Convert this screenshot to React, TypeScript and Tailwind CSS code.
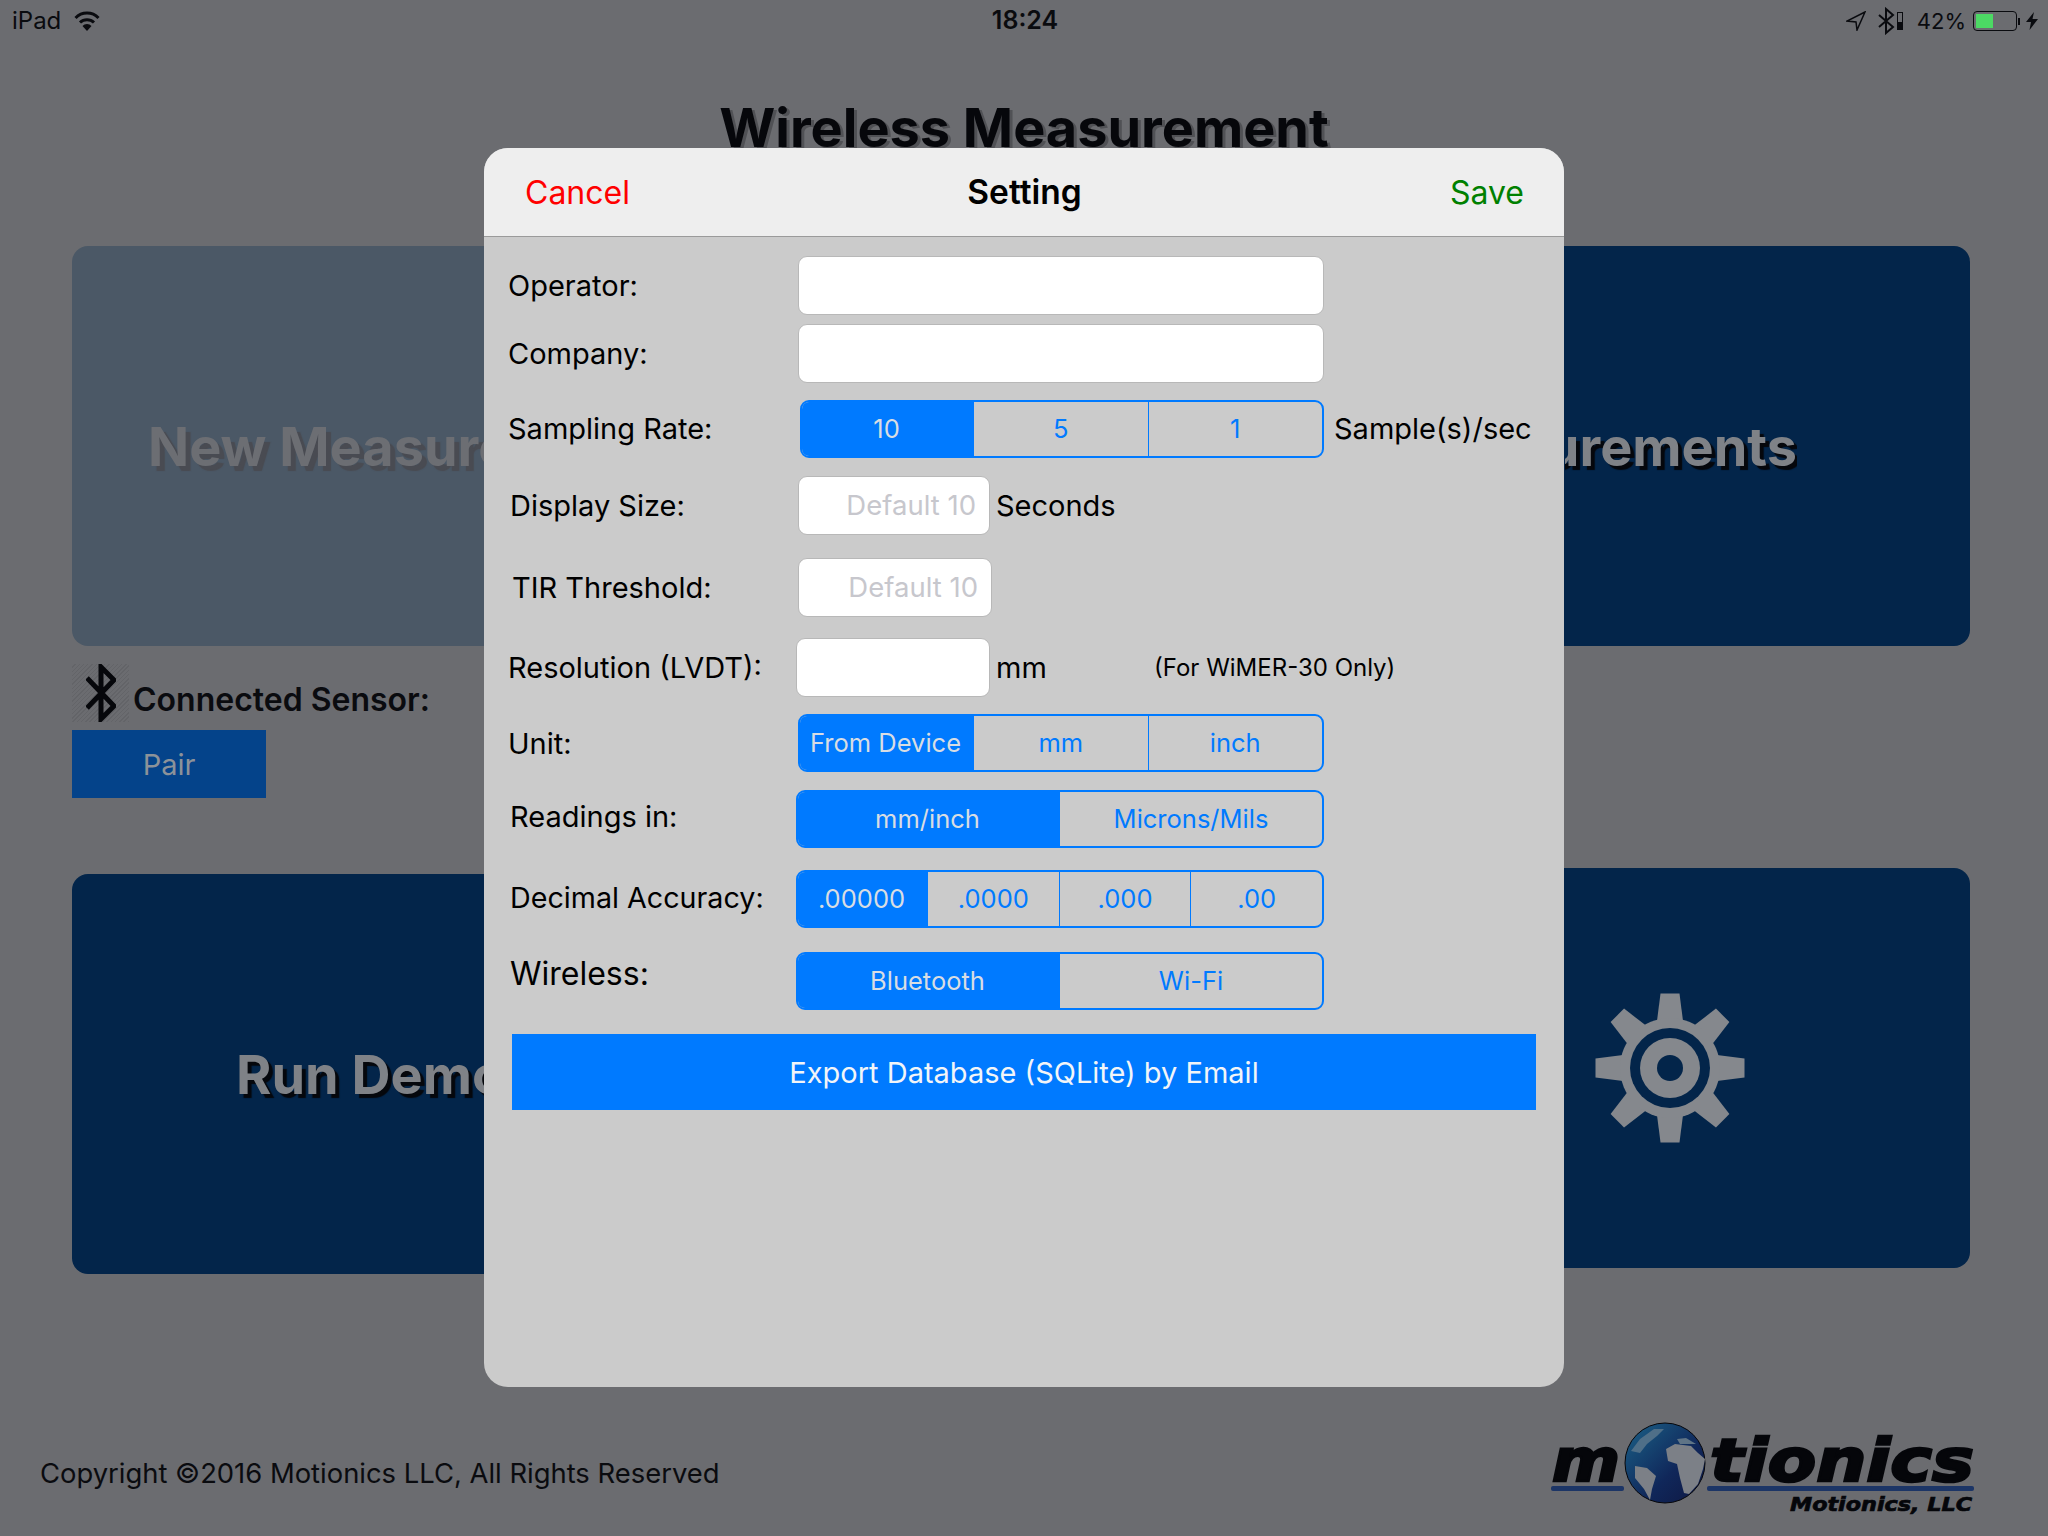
import type { ReactNode } from "react";

const font = "font-['Inter','Liberation_Sans',sans-serif]";

function Field({ width, hint }: { width: string; hint?: string }) {
  return (
    <div
      className={`${width} h-[59px] rounded-[9px] bg-white border border-[#b8b8b8] flex items-center justify-end pr-[13px] text-[27.5px] text-[#c7c7cd]`}
    >
      {hint}
    </div>
  );
}

function Segments({
  items,
  first,
  width,
}: {
  items: string[];
  first: string;
  width: string;
}) {
  return (
    <div
      className={`${width} h-[58px] flex rounded-[9px] border-[2px] border-[#007aff] overflow-hidden text-[25.5px] text-[#007aff]`}
    >
      {items.map((item, idx) =>
        idx === 0 ? (
          <div
            key={item}
            className={`${first} shrink-0 pr-[3px] bg-[#007aff] text-[#d8dde3] flex items-center justify-center`}
          >
            {item}
          </div>
        ) : (
          <div
            key={item}
            className={`flex-1 flex items-center justify-center ${idx > 1 ? "border-l-[1.5px] border-[#007aff]" : ""}`}
          >
            {item}
          </div>
        ),
      )}
    </div>
  );
}

function Row({
  label,
  labelClass,
  className,
  children,
}: {
  label: string;
  labelClass: string;
  className: string;
  children: ReactNode;
}) {
  return (
    <div className={`flex items-center ${className}`}>
      <div className={`shrink-0 text-black ${labelClass}`}>{label}</div>
      {children}
    </div>
  );
}

function SettingModal() {
  return (
    <div className="absolute left-[484px] top-[148px] w-[1080px] h-[1239px] rounded-[24px] bg-[#cbcbcb] overflow-hidden">
      <div className="h-[89px] pt-[2px] grid grid-cols-3 items-center pl-[41px] pr-[40px] bg-[#eeeeee] border-b border-[#9a9a9a] text-[32px]">
        <span className="text-[#ff0000]">Cancel</span>
        <span className="text-center text-[33.5px] font-semibold text-black -translate-y-px">Setting</span>
        <span className="text-right text-[#008000]">Save</span>
      </div>

      <Row label="Operator:" labelClass="text-[29px] w-[314px] pl-[24px]" className="mt-[19px]">
        <Field width="w-[526px]" />
      </Row>
      <Row label="Company:" labelClass="text-[29px] w-[314px] pl-[24px]" className="mt-[9px]">
        <Field width="w-[526px]" />
      </Row>
      <Row label="Sampling Rate:" labelClass="text-[29px] w-[316px] pl-[24px]" className="mt-[17px]">
        <Segments items={["10", "5", "1"]} first="w-[172px]" width="w-[524px]" />
        <span className="ml-[10px] text-[29px] text-black">Sample(s)/sec</span>
      </Row>
      <Row label="Display Size:" labelClass="text-[29px] w-[314px] pl-[26px]" className="mt-[18px]">
        <Field width="w-[192px]" hint="Default 10" />
        <span className="ml-[6px] text-[29px] text-black">Seconds</span>
      </Row>
      <Row label="TIR Threshold:" labelClass="text-[29px] w-[314px] pl-[28px]" className="mt-[23px]">
        <Field width="w-[194px]" hint="Default 10" />
      </Row>
      <Row label="Resolution (LVDT):" labelClass="text-[29px] w-[312px] pl-[24px]" className="mt-[21px]">
        <Field width="w-[194px]" />
        <span className="ml-[6px] w-[158px] text-[29px] text-black">mm</span>
        <span className="text-[24px] text-black">(For WiMER-30 Only)</span>
      </Row>
      <Row label="Unit:" labelClass="text-[29px] w-[314px] pl-[24px] translate-y-px" className="mt-[17px]">
        <Segments items={["From Device", "mm", "inch"]} first="w-[174px]" width="w-[526px]" />
      </Row>
      <Row label="Readings in:" labelClass="text-[29px] w-[312px] pl-[26px] -translate-y-[2px]" className="mt-[18px]">
        <Segments items={["mm/inch", "Microns/Mils"]} first="w-[262px]" width="w-[528px]" />
      </Row>
      <Row label="Decimal Accuracy:" labelClass="text-[28.7px] w-[312px] pl-[26px] -translate-y-px" className="mt-[22px]">
        <Segments items={[".00000", ".0000", ".000", ".00"]} first="w-[130px]" width="w-[528px]" />
      </Row>
      <Row label="Wireless:" labelClass="text-[32px] w-[312px] pl-[26px] -translate-y-[7px]" className="mt-[24px]">
        <Segments items={["Bluetooth", "Wi-Fi"]} first="w-[262px]" width="w-[528px]" />
      </Row>

      <div className="mt-[24px] mx-[28px] h-[76px] pt-[2px] bg-[#007aff] flex items-center justify-center text-[29px] text-[#f2f5f8]">
        Export Database (SQLite) by Email
      </div>
    </div>
  );
}

function StatusBar() {
  return (
    <div className="h-[40px] pt-[2px] flex items-center justify-between pl-[12px] pr-[10px] text-[24px] text-[#0a0b0f]">
      <div className="flex-1 flex items-center gap-[13px]">
        <span>iPad</span>
        <svg width="26" height="20" viewBox="0 0 26 20" fill="none" stroke="#0a0b0f" strokeWidth="3">
          <path d="M1.5 7 A16 16 0 0 1 24.5 7" />
          <path d="M6 11.5 A10 10 0 0 1 20 11.5" />
          <path d="M13 20 L8.5 15 A6 6 0 0 1 17.5 15 Z" fill="#0a0b0f" stroke="none" />
        </svg>
      </div>
      <span className="text-[25px] font-semibold">18:24</span>
      <div className="flex-1 flex items-center justify-end">
        <svg width="20" height="20" viewBox="0 0 20 20" fill="none" stroke="#0a0b0f" strokeWidth="1.5">
          <path d="M19 1 L1 10 L10 11 L11 19 Z" />
        </svg>
        <svg className="ml-[12px]" width="17" height="28" viewBox="0 0 17 28" fill="none" stroke="#0a0b0f" strokeWidth="2">
          <polyline points="1,8 15,20 8,26 8,2 15,8 1,20" />
        </svg>
        <div className="ml-[2px] w-[6px] h-[18px] border border-[#0a0b0f] flex items-end">
          <div className="w-full h-[7px] bg-[#0a0b0f]" />
        </div>
        <span className="ml-[14px] text-[22px]">42%</span>
        <div className="ml-[7px] w-[44px] h-[20px] rounded-[4px] border border-[#0a0b0f] p-[2px]">
          <div className="w-[17px] h-full bg-[#4cd964]" />
        </div>
        <div className="ml-[1px] w-[2px] h-[7px] bg-[#0a0b0f]" />
        <svg className="ml-[6px]" width="12" height="18" viewBox="0 0 12 18" fill="#0a0b0f">
          <path d="M8 0 L0 10 L5 10 L3.5 18 L12 7 L6.5 7 Z" />
        </svg>
      </div>
    </div>
  );
}

function Gear() {
  const teeth = [0, 45, 90, 135, 180, 225, 270, 315];
  return (
    <svg width="150" height="150" viewBox="0 0 150 150">
      {teeth.map((deg) => (
        <polygon
          key={deg}
          points="65.5,0.5 84.5,0.5 88,28 62,28"
          fill="#85888d"
          transform={`rotate(${deg} 75 75)`}
        />
      ))}
      <circle cx="75" cy="75" r="50" fill="#85888d" />
      <circle cx="75" cy="75" r="40" fill="#03254a" />
      <circle cx="75" cy="75" r="30" fill="#85888d" />
      <circle cx="75" cy="75" r="13" fill="#03254a" />
    </svg>
  );
}

function Logo() {
  const wordFont = "'DejaVu Sans', sans-serif";
  return (
    <svg className="-translate-y-[5px]" width="425" height="95" viewBox="0 0 425 95">
      <defs>
        <linearGradient id="ocean" x1="0" y1="0" x2="1" y2="1">
          <stop offset="0" stopColor="#1b6288" />
          <stop offset="0.6" stopColor="#10275a" />
          <stop offset="1" stopColor="#0e1742" />
        </linearGradient>
      </defs>
      <text
        x="1"
        y="60"
        fontFamily={wordFont}
        fontWeight="700"
        fontStyle="italic"
        fontSize="59"
        textLength="68"
        lengthAdjust="spacingAndGlyphs"
        fill="#05060a"
        stroke="#05060a"
        strokeWidth="2.5"
      >
        m
      </text>
      <text
        x="159"
        y="60"
        fontFamily={wordFont}
        fontWeight="700"
        fontStyle="italic"
        fontSize="59"
        textLength="264"
        lengthAdjust="spacingAndGlyphs"
        fill="#05060a"
        stroke="#05060a"
        strokeWidth="2.5"
      >
        tionics
      </text>
      <rect x="0" y="65" width="73" height="5" rx="2" fill="#1c3566" />
      <rect x="156" y="65" width="267" height="5" rx="2" fill="#1c3566" />
      <text
        x="239"
        y="90"
        fontFamily={wordFont}
        fontWeight="700"
        fontStyle="italic"
        fontSize="19"
        textLength="182"
        lengthAdjust="spacingAndGlyphs"
        fill="#05060a"
        stroke="#05060a"
        strokeWidth="0.7"
      >
        Motionics, LLC
      </text>
      <circle cx="114" cy="42" r="40" fill="url(#ocean)" stroke="#05060a" strokeWidth="1" />
      <path
        d="M115 28 L124 23 L140 25 L147 32 L154 38 L152 48 L147 63 L138 73 L133 72 L129 57 L126 43 L117 40 Z"
        fill="#7c8087"
      />
      <path d="M84 45 L96 47 L105 55 L101 68 L99 79 L93 68 L84 57 Z" fill="#7c8087" />
      <path d="M126 18 L135 17 L145 23 L140 23 L129 23 Z" fill="#5f7486" />
      <path d="M89 18 L103 8 L113 8 L106 15 L96 23 L89 32 L80 30 Z" fill="#4f6f88" />
    </svg>
  );
}

function Background() {
  const shadow = "[text-shadow:4px_4px_1px_#05070c]";
  return (
    <div className="h-full flex flex-col">
      <StatusBar />
      <h1 className="mt-[53px] h-[70px] text-center text-[54px] leading-[70px] font-bold text-[#06070b] [text-shadow:3px_2px_0_#505155]">
        Wireless Measurement
      </h1>
      <div className="mt-[83px] pl-[72px] pr-[78px] flex justify-between">
        <div className="w-[600px]">
          <div className="h-[400px] rounded-2xl bg-[#4b5866] flex items-center pl-[76px] text-[54px] font-bold text-[#6c6e73] [text-shadow:5px_5px_1px_#494b52]">
            <span className="w-[336px] overflow-hidden whitespace-nowrap">New Measurement</span>
          </div>
          <div className="mt-[18px] h-[58px] flex items-center">
            <div className="w-[57px] h-[58px] flex justify-center bg-[repeating-linear-gradient(135deg,#6b6c70_0,#6b6c70_2px,#636468_2px,#636468_3px)]">
              <svg width="30" height="58" viewBox="0 0 30 58" fill="none" stroke="#06070b" strokeWidth="5">
                <polyline points="1,14 28,42 15,55 15,3 28,16 1,44" />
              </svg>
            </div>
            <span className="ml-[4px] pt-[14px] text-[32px] font-semibold text-[#0a0b0f]">
              Connected Sensor:
            </span>
          </div>
          <div className="mt-[8px] w-[194px] h-[68px] pt-[2px] bg-[#04438a] flex items-center justify-center text-[29px] text-[#8c9299]">
            Pair
          </div>
          <div className={`mt-[76px] h-[400px] rounded-2xl bg-[#03254a] flex items-center pl-[164px] text-[54px] font-bold text-[#7f8287] ${shadow}`}>
            <span className="w-[248px] overflow-hidden whitespace-nowrap">Run Demo</span>
          </div>
        </div>
        <div className="w-[600px]">
          <div className={`h-[400px] rounded-2xl bg-[#03254a] flex items-center justify-end pr-[173px] text-[54px] font-bold text-[#7f8287] ${shadow}`}>
            <span className="w-[232px] flex justify-end overflow-hidden whitespace-nowrap">Measurements</span>
          </div>
          <div className="mt-[222px] h-[400px] rounded-2xl bg-[#03254a] flex items-center justify-end pr-[225px]">
            <Gear />
          </div>
        </div>
      </div>
      <div className="mt-[152px] pl-[40px] pr-[72px] flex items-center justify-between">
        <span className="text-[27.4px] text-[#0a0b0f]">Copyright ©2016 Motionics LLC, All Rights Reserved</span>
        <Logo />
      </div>
    </div>
  );
}

export default function App() {
  return (
    <div className={`relative w-[2048px] h-[1536px] overflow-hidden bg-[#6b6c70] ${font}`}>
      <Background />
      <SettingModal />
    </div>
  );
}
